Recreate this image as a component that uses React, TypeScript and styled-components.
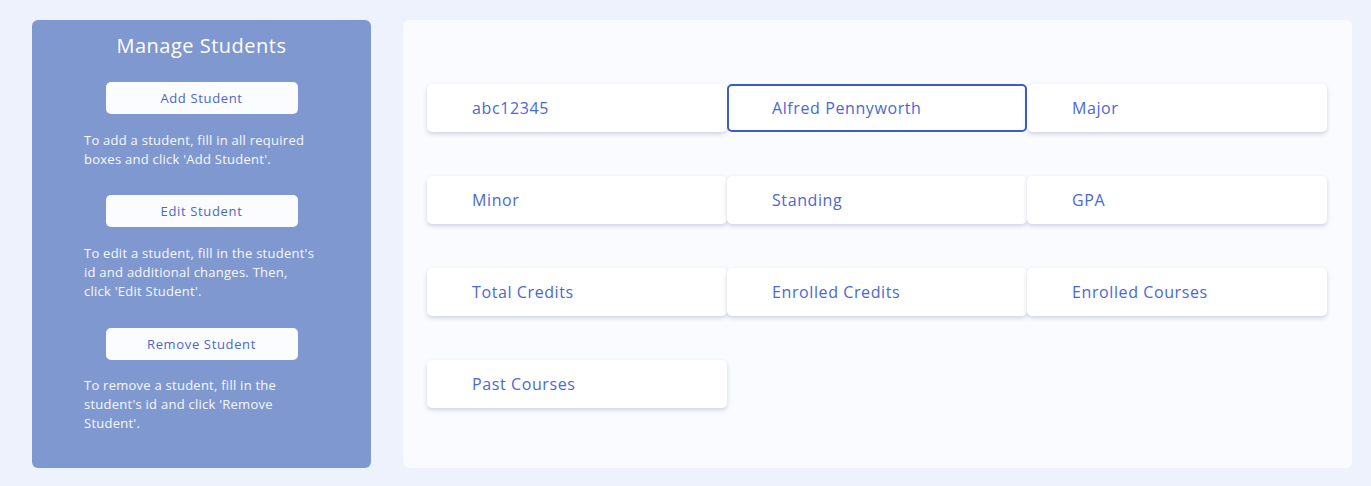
import React, { useEffect, useRef } from "react";
import styled, { createGlobalStyle, css } from "styled-components";

const Global = createGlobalStyle`
  html, body { margin: 0; padding: 0; }
  body {
    background: #edf2fd;
    font-family: "Open Sans", "Noto Sans", sans-serif;
  }
  * { box-sizing: border-box; }
`;

const Page = styled.div`
  display: flex;
  gap: 32px;
  padding: 20px 19px 18px 32px;
  height: 486px;
`;

const Sidebar = styled.aside`
  width: 339px;
  flex: none;
  background: #7f98cf;
  border-radius: 6px;
  display: flex;
  flex-direction: column;
  align-items: center;
  padding: 14px 0 0;
  color: #f6f8fe;
`;

const Title = styled.h2`
  margin: 0 0 24px;
  font-size: 20px;
  font-weight: 400;
  line-height: 24px;
  letter-spacing: 0.5px;
  color: #ffffff;
`;

const ActionButton = styled.button`
  width: 192px;
  height: 32px;
  flex: none;
  border: none;
  border-radius: 5px;
  background: #fbfcff;
  color: #4a66cf;
  font-family: inherit;
  font-size: 13px;
  letter-spacing: 0.65px;
  cursor: pointer;
`;

const Hint = styled.p<{ $top: number; $gap: number }>`
  width: 232px;
  margin: ${(p) => p.$top}px 0 ${(p) => p.$gap}px 52px;
  font-size: 13px;
  line-height: 19px;
  letter-spacing: 0.25px;
  color: #f6f8fe;
  align-self: flex-start;
`;

const Main = styled.main`
  flex: 1;
  background: #f9fbff;
  border-radius: 6px;
  padding: 64px 24px 0;
`;

const Grid = styled.div`
  display: grid;
  grid-template-columns: repeat(3, 300px);
  row-gap: 44px;
`;

const Field = styled.input<{ $active?: boolean }>`
  height: 48px;
  width: 300px;
  border: 2px solid transparent;
  border-radius: 5px;
  background: #ffffff;
  box-shadow: 0 2px 4px rgba(60, 70, 110, 0.22);
  padding: 0 0 0 43px;
  font-family: inherit;
  font-size: 16px;
  letter-spacing: 0.6px;
  color: #4a68d4;
  outline: none;
  caret-color: #000;
  &::placeholder { color: #4a68d4; opacity: 1; }
  ${(p) =>
    p.$active &&
    css`
      border-color: #3a5ec8;
      box-shadow: none;
    `}
`;

const fields: { value?: string; placeholder?: string; active?: boolean }[] = [
  { value: "abc12345" },
  { value: "Alfred Pennyworth", active: true },
  { placeholder: "Major" },
  { placeholder: "Minor" },
  { placeholder: "Standing" },
  { placeholder: "GPA" },
  { placeholder: "Total Credits" },
  { placeholder: "Enrolled Credits" },
  { placeholder: "Enrolled Courses" },
  { placeholder: "Past Courses" },
];

export default function App() {
  const ref = useRef<HTMLInputElement>(null);
  useEffect(() => {
    const el = ref.current;
    if (el) {
      el.focus();
      const n = el.value.length;
      el.setSelectionRange(n, n);
    }
  }, []);
  return (
    <>
      <Global />
      <Page>
        <Sidebar>
          <Title>Manage Students</Title>
          <ActionButton>Add Student</ActionButton>
          <Hint $top={17} $gap={26}>
            To add a student, fill in all required boxes and click 'Add Student'.
          </Hint>
          <ActionButton>Edit Student</ActionButton>
          <Hint $top={17} $gap={27}>
            To edit a student, fill in the student's id and additional changes. Then, click 'Edit Student'.
          </Hint>
          <ActionButton>Remove Student</ActionButton>
          <Hint $top={16} $gap={0}>
            To remove a student, fill in the student's id and click 'Remove Student'.
          </Hint>
        </Sidebar>
        <Main>
          <Grid>
            {fields.map((f, i) => (
              <Field
                key={i}
                ref={f.active ? ref : undefined}
                $active={f.active}
                defaultValue={f.value}
                placeholder={f.placeholder}
              />
            ))}
          </Grid>
        </Main>
      </Page>
    </>
  );
}
